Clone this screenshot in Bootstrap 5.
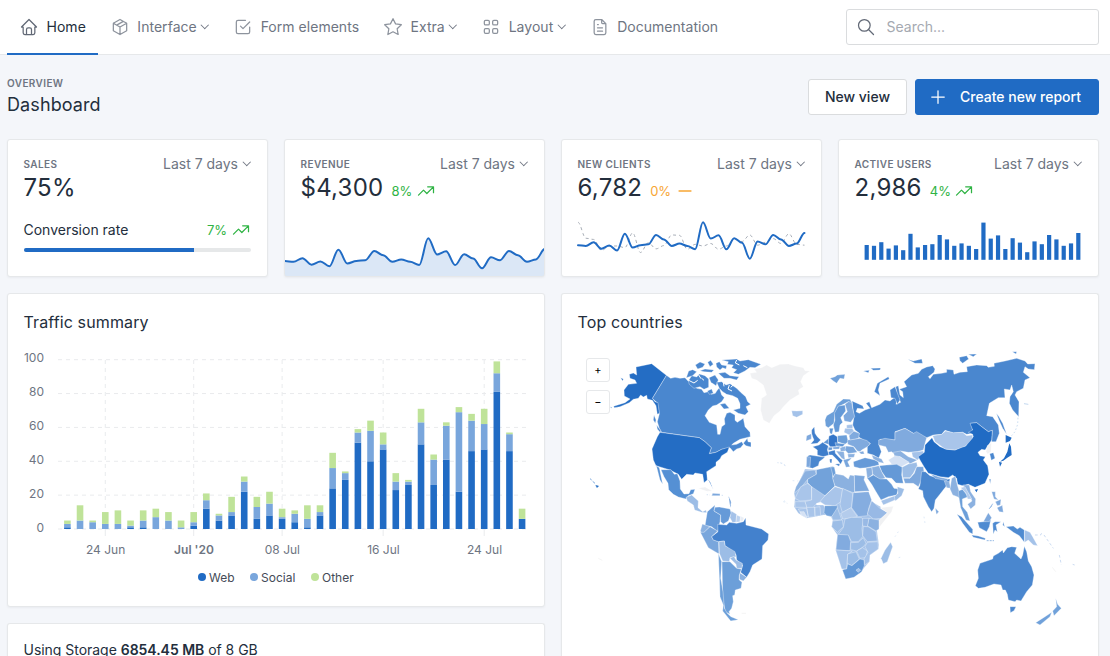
<!DOCTYPE html>
<html lang="en">
<head>
<meta charset="utf-8">
<meta name="viewport" content="width=device-width, initial-scale=1">
<title>Dashboard</title>
<link href="https://cdn.jsdelivr.net/npm/bootstrap@5.3.0/dist/css/bootstrap.min.css" rel="stylesheet">
<style>
:root{--blue:#206bc4;--ink:#232e3c;--muted:#6e7582;--line:#e6e8ea}
body{font-family:Inter,"Liberation Sans",sans-serif;font-size:14px;line-height:20px;color:var(--ink);background:#f4f6fa;height:656px;overflow:hidden}
.wrap{padding:0 11px 0 7px}
.topbar{height:55px;background:#fff;border-bottom:1px solid var(--line)}
.topbar .nav-link{height:55px;padding:0 12px 1px;color:var(--muted);display:flex;align-items:center;gap:7.5px;letter-spacing:.03px;white-space:nowrap}
.topbar .nav-link.active{color:var(--ink);border-bottom:2px solid var(--blue);padding:1px 12px 0}
.topbar .nav-link .ico{color:#8d939d}
.topbar .nav-link.active .ico{color:#626976}
.ico{width:20px;height:20px;flex:none;fill:none;stroke:currentColor;stroke-width:1.5;stroke-linecap:round;stroke-linejoin:round}
.caret{display:inline-block;width:5.5px;height:5.5px;border:solid currentColor;border-width:0 1.2px 1.2px 0;transform:rotate(45deg);margin:0 1.5px 2px 6px;vertical-align:2.5px}
.topbar .caret{margin:0 1.2px 2px 5.7px}
.finder{width:253px;height:36px;border:1px solid #dadcde;border-radius:3px;background:#fff;color:#626976;padding-left:9px;gap:10.5px;margin-top:9px}
.finder input{border:0;outline:0;width:190px;padding:0;background:none;color:var(--ink)}
.finder input::placeholder{color:#a5a9b1}
.pagehead{height:84px;padding-top:24px}
.sub{font-size:10px;font-weight:600;letter-spacing:.4px;color:var(--muted);text-transform:uppercase}
.over{line-height:9px}
.ttl{font-size:18px;line-height:24px;font-weight:400;letter-spacing:.1px;margin-top:4.5px}
.btn-flat{height:36px;border:1px solid #dadcde;border-radius:3px;font-size:14px;line-height:20px;padding:0 16px;font-weight:500;background:#fff;color:var(--ink);display:flex;align-items:center}
.btn-go{background:var(--blue);border-color:var(--blue);color:#fff;width:184px;padding:0 12px;gap:12px}
.tiles{display:grid;grid-template-columns:repeat(4,1fr);gap:16px}
.halves{display:grid;grid-template-columns:repeat(2,1fr);gap:16px;margin-top:16px;height:363px}
.panel{background:#fff;border:1px solid var(--line);border-radius:3px;box-shadow:0 1px 2px rgba(35,46,60,.05);overflow:hidden;position:relative}
.tile{height:138px}
.tile .inner{padding:14px 16px 0 15.5px}
.period{color:var(--muted);white-space:nowrap}
.figure-num{font-size:24px;line-height:28px;letter-spacing:.25px}
.up{color:#2fb344}.flat{color:#f7a634}
.conv{margin-top:18px}
.conv .up,.delta{font-size:13px}
.delta{line-height:20px;height:20px;margin-top:7px}
.delta .ico{margin-left:3.5px}
.bar-track{height:4px;border-radius:2px;background:#e6e8e9;margin-top:8px}
.bar-track .progress-bar{background:var(--blue)}
.spark{display:block}
.ptitle{font-size:16px;line-height:20px;height:46px;padding:18px 16px 0 15.5px;font-weight:400;letter-spacing:.12px}
.tick{font-size:12px;fill:#6e7582}
.legend-t{font-size:12px;fill:#444b57}
.zbtn{position:absolute;left:24px;width:24px;height:24px;border:1px solid var(--line);border-radius:3px;background:#fff;font-size:11px;line-height:23px;text-align:center;padding:0}
.z-in{top:64px}.z-out{top:96px}
.traffic{height:314px;flex:none}
.storage{height:33px;padding:16px 15.5px 0;letter-spacing:-.03px;line-height:20px}
.storage strong{font-weight:600}
.cut{border-bottom:0;border-radius:3px 3px 0 0}
.world path{stroke:#fff;stroke-opacity:.6;stroke-width:1.7;stroke-linejoin:round}
.world .channel{stroke-opacity:1;stroke-width:3;fill:none}
</style>
</head>
<body>
<svg width="0" height="0" class="d-none">
<symbol id="i-home" viewBox="0 0 24 24"><path d="M5 12H3l9-9 9 9h-2M5 12v7a2 2 0 0 0 2 2h10a2 2 0 0 0 2-2v-7M9 21v-6a2 2 0 0 1 2-2h2a2 2 0 0 1 2 2v6"/></symbol>
<symbol id="i-box" viewBox="0 0 24 24"><path d="M12 3l8 4.500v9L12 21l-8-4.500v-9zM12 12l8-4.500M12 12v9M12 12L4 7.500M16 5.250l-8 4.500"/></symbol>
<symbol id="i-check" viewBox="0 0 24 24"><path d="M9 11l3 3 8-8M20 12v6a2 2 0 0 1-2 2H6a2 2 0 0 1-2-2V6a2 2 0 0 1 2-2h9"/></symbol>
<symbol id="i-star" viewBox="0 0 24 24"><path d="M12 17.750l-6.172 3.245 1.179-6.873-4.993-4.867 6.900-1L12 2l3.086 6.253 6.900 1-4.993 4.867 1.179 6.873z"/></symbol>
<symbol id="i-grid" viewBox="0 0 24 24"><rect x="4" y="4" width="6" height="5.500" rx="1.500"/><rect x="4" y="14" width="6" height="5.500" rx="1.500"/><rect x="14" y="4" width="6" height="5.500" rx="1.500"/><rect x="14" y="14" width="6" height="5.500" rx="1.500"/></symbol>
<symbol id="i-doc" viewBox="0 0 24 24"><path d="M14 3v4a1 1 0 0 0 1 1h4M17 21H7a2 2 0 0 1-2-2V5a2 2 0 0 1 2-2h7l5 5v11a2 2 0 0 1-2 2zM9 9h1M9 13h6M9 17h6"/></symbol>
<symbol id="i-find" viewBox="0 0 24 24"><circle cx="10" cy="10" r="7"/><path d="M21 21l-6-6"/></symbol>
<symbol id="i-plus" viewBox="0 0 24 24"><path d="M12 4.500v15M4.500 12h15"/></symbol>
<symbol id="i-up" viewBox="0 0 24 24"><path d="M3 17l6-6 4 4 8-8M14 7h7v7"/></symbol>
<symbol id="i-minus" viewBox="0 0 24 24"><path d="M5 12h14" stroke-width="2"/></symbol>
</svg>

<header class="topbar">
 <div class="wrap d-flex justify-content-between">
  <nav class="nav flex-nowrap">
   <a class="nav-link active" href="#"><svg class="ico"><use href="#i-home"/></svg><span>Home</span></a>
   <a class="nav-link" href="#"><svg class="ico"><use href="#i-box"/></svg><span>Interface<i class="caret"></i></span></a>
   <a class="nav-link" href="#"><svg class="ico"><use href="#i-check"/></svg><span>Form elements</span></a>
   <a class="nav-link" href="#"><svg class="ico"><use href="#i-star"/></svg><span>Extra<i class="caret"></i></span></a>
   <a class="nav-link" href="#"><svg class="ico"><use href="#i-grid"/></svg><span>Layout<i class="caret"></i></span></a>
   <a class="nav-link" href="#"><svg class="ico"><use href="#i-doc"/></svg><span>Documentation</span></a>
  </nav>
  <div class="finder d-flex align-items-center"><svg class="ico"><use href="#i-find"/></svg><input placeholder="Search..."></div>
 </div>
</header>

<main class="wrap">
 <div class="pagehead d-flex justify-content-between">
  <div><div class="sub over">Overview</div><div class="ttl">Dashboard</div></div>
  <div class="d-flex gap-2"><button class="btn btn-flat">New view</button><button class="btn btn-flat btn-go"><svg class="ico"><use href="#i-plus"/></svg>Create new report</button></div>
 </div>

 <section class="tiles">
  <div class="panel tile"><div class="inner">
   <div class="d-flex justify-content-between"><span class="sub">Sales</span><span class="period">Last 7 days<i class="caret"></i></span></div>
   <div class="figure-num">75%</div>
   <div class="conv d-flex justify-content-between"><span>Conversion rate</span><span class="up d-flex">7%<svg class="ico ms-1"><use href="#i-up"/></svg></span></div>
   <div class="bar-track d-flex overflow-hidden"><div class="progress-bar w-75"></div></div>
  </div></div>
  <div class="panel tile"><div class="inner">
   <div class="d-flex justify-content-between"><span class="sub">Revenue</span><span class="period">Last 7 days<i class="caret"></i></span></div>
   <div class="d-flex"><span class="figure-num me-2">$4,300</span><span class="delta up d-flex">8%<svg class="ico"><use href="#i-up"/></svg></span></div>
  </div><svg class="spark" id="rev" width="259" height="75" viewBox="285 202 259 75"></svg></div>
  <div class="panel tile"><div class="inner">
   <div class="d-flex justify-content-between"><span class="sub">New clients</span><span class="period">Last 7 days<i class="caret"></i></span></div>
   <div class="d-flex"><span class="figure-num me-2">6,782</span><span class="delta flat d-flex">0%<svg class="ico"><use href="#i-minus"/></svg></span></div>
  </div><svg class="spark" id="cli" width="259" height="74" viewBox="562 202 259 74"></svg></div>
  <div class="panel tile"><div class="inner">
   <div class="d-flex justify-content-between"><span class="sub">Active users</span><span class="period">Last 7 days<i class="caret"></i></span></div>
   <div class="d-flex"><span class="figure-num me-2">2,986</span><span class="delta up d-flex">4%<svg class="ico"><use href="#i-up"/></svg></span></div>
  </div><svg class="spark" id="act" width="259" height="74" viewBox="839 202 259 74"></svg></div>
 </section>

 <section class="halves">
  <div class="d-flex flex-column gap-3">
   <div class="panel traffic"><div class="ptitle">Traffic summary</div>
    <svg class="spark" id="traffic" width="536" height="266" viewBox="8 340 536 266"></svg></div>
   <div class="panel storage cut">Using Storage <strong>6854.45 MB</strong> of 8 GB</div>
  </div>
  <div class="panel cut"><div class="ptitle">Top countries</div>
   <button class="zbtn z-in">+</button><button class="zbtn z-out">−</button>
   <svg class="spark world" width="536" height="316" viewBox="562 340 536 316">
<g transform="translate(570 345) scale(.33333)">
<g fill="#4a87cf">
<path d="M289,91L302,100 315,97 330,100 345,98 352,106 368,118 380,130 395,133 402,143 415,140 425,148 436,145 440,138 448,128 455,150 463,158 455,170 440,180 428,183 415,195 405,212 418,232 440,240 443,268 450,268 455,245 465,238 463,222 470,205 480,202 495,210 495,226 502,232 520,220 525,245 540,262 541,275 510,283 490,295 485,300 500,298 515,290 520,298 512,308 500,312 490,320 480,308 455,313 438,322 418,326 424,308 405,290 388,278 275,262 268,250 262,230 268,207 262,174 247,160Z"/>
<path d="M355,108L365,92 380,96 388,87 405,92 416,102 416,127 402,133 390,125 372,130 358,118Z"/><path d="M349,98L356,78 368,74 380,80 368,92Z"/>
<path d="M376,60L390,51 405,57 398,67 383,72Z"/><path d="M390,77L405,72 432,75 425,82 402,80Z"/><path d="M413,52L422,46 430,58 420,65Z"/>
<path d="M438,55L448,50 455,60 470,62 468,72 458,68 450,75 440,66Z"/><path d="M455,45L500,42 510,48 535,44 573,58 555,68 540,67 525,78 505,88 490,83 500,74 485,68 490,60 472,58 475,50Z"/>
<path d="M445,85L465,82 480,92 507,95 500,105 480,100 462,100Z"/><path d="M417,98L435,90 445,105 438,122 423,112Z"/>
<path d="M440,112L455,110 468,120 480,116 500,130 512,142 527,155 533,170 542,178 528,185 535,200 525,210 505,205 490,195 510,190 510,176 503,160 488,152 470,148 458,140 448,130Z"/>
<path d="M450,178L465,175 478,190 462,192Z"/><path d="M520,295L532,280 534,290 543,292 543,306 528,302Z"/><path d="M412,138L425,132 430,145 418,148Z"/><path d="M252,210L258,225 256,235 250,225Z"/><path d="M260,240L273,258 270,262 262,252Z"/>
</g>
<path class="channel" d="M352,104L372,114 383,106M386,90L393,101M478,120L474,132 486,138M500,45L496,54 508,60M520,62L532,68M490,120L482,127M460,112L462,124M395,100L402,106"/>
<g fill="#246dc4"><path d="M198,66L245,56 289,91 247,160 255,170 264,173 268,205 262,208 258,182 247,166 232,162 230,151 220,156 212,150 205,160 190,163 178,173 150,185 133,188 131,184 165,173 180,162 163,153 162,135 175,118 200,115 195,105 180,100 178,88 190,84 200,90Z"/>
<path d="M270,262L388,278 405,290 424,308 418,326 438,322 455,313 478,306 472,322 455,332 450,342 438,352 438,362 410,380 412,405 402,413 398,388 375,384 370,390 350,388 335,403 325,388 300,375 258,362 250,345 246,312 262,275Z"/><path d="M152,98L160,102 158,108Z"/><path style="stroke:#246dc4" d="M77,421L86,423 81,428Z"/><path d="M60,401L65,405M68,409L75,415M122,187L125,188" style="stroke:#246dc4;stroke-width:3"/></g>
<path fill="#5590d4" d="M273,374L303,374 313,388 322,386 330,408 331,432 342,447 357,446 362,434 375,433 370,446 355,452 348,462 325,456 310,448 296,434 294,415 282,395Z"/><path fill="#5590d4" d="M259,362L268,368 278,418 270,405Z"/>
<path fill="#9cbde6" d="M348,457L365,450 385,468 384,488 398,500 408,495 410,503 395,502 374,495 370,480 352,468Z"/>
<path fill="#f0f1f3" d="M385,430L405,426 427,438 410,439Z"/><path fill="#7da8dd" d="M428,445L450,446 450,452 425,452Z"/><path fill="#7da8dd" d="M410,449L420,450M455,451L464,451M476,455L483,470 481,488M415,405L420,410 428,430" style="stroke:#7da8dd;stroke-dasharray:4 5"/>
<path fill="#669ad8" d="M412,500L435,480 432,498 452,510 450,530 443,560 425,545 405,542Z"/>
<path fill="#669ad8" d="M435,487L448,486 480,492 484,505 475,528 460,537 452,530 452,510 432,498Z"/>
<path fill="#a4c2e9" d="M484,498L500,508 498,532 487,532 480,518Z"/><path fill="#bcd2ef" d="M500,510L512,515 510,530 498,532Z"/><path fill="#e8edf5" d="M512,514L522,518 518,530 510,530Z"/>
<path fill="#8bb1e0" d="M397,537L420,545 398,567 391,558Z"/>
<path fill="#79a6dc" d="M391,562L402,562 420,545 443,558 425,575 430,585 446,590 447,627 415,608Z"/>
<path fill="#4381cd" d="M443,538L470,540 478,532 500,535 520,530 527,518 528,540 575,552 596,567 594,585 578,602 576,642 548,660 540,680 530,697 512,682 518,660 500,645 498,628 465,602 463,588 446,590 430,585 425,575 444,560Z"/>
<path fill="#9cbde6" d="M447,590L463,588 465,602 495,620 498,635 480,638 478,650 458,648 448,625Z"/>
<path fill="#9cbde6" d="M480,640L492,634 498,645 517,655 516,670 500,670 498,658Z"/>
<path fill="#8bb1e0" d="M509,683L530,697 520,708 508,703Z"/>
<path fill="#6c9fd9" d="M456,650L480,650 500,670 514,672 508,690 507,704 516,712 513,730 496,735 494,750 488,752 490,770 485,790 477,800 480,808 466,800 458,760Z"/>
<path fill="#6c9fd9" d="M445,625L455,650 452,700 459,740 463,790 472,805 483,815 505,824 482,828 458,798 460,780 450,755 449,720Z"/>
<path fill="#f0f1f3" stroke="none" d="M540,85L560,82 552,72 575,68 590,60 605,68 630,58 655,57 675,63 700,68 705,77 720,78 700,92 692,110 700,125 685,135 688,148 660,165 640,185 630,198 612,212 598,235 580,225 572,195 575,160 590,150 580,120 560,105 545,100Z"/>
<path fill="none" style="stroke:#8bb1e0;stroke-dasharray:4 7" d="M622,353L640,355 648,365M640,470L652,475"/>
<path fill="#eee" d="M515,805L528,805M85,640L97,646" style="stroke:#ddd"/>
</g>
<g transform="translate(780 345) scale(.33333)">
<path fill="#4a87cf" d="M216,168L248,182 252,192 232,190 228,200 238,205 255,195 270,190 258,175 268,170 275,188 300,178 315,165 330,168 345,156 352,162 348,178 362,172 352,150 347,125 355,122 360,150 370,158 368,140 358,133 380,125 372,110 395,90 415,85 425,73 440,66 458,62 465,72 462,82 445,95 450,101 460,88 485,85 500,82 500,73 520,75 522,88 540,82 562,80 560,65 590,60 620,62 625,67 643,64 642,55 675,48 710,40 735,48 743,57 765,56 763,74 745,72 735,65 730,82 750,98 735,105 730,130 710,140 705,150 717,170 716,215 698,195 688,175 690,155 700,140 695,120 690,135 673,132 675,158 655,158 628,175 620,212 638,215 655,240 658,265 648,290 635,290 637,256 625,260 605,245 590,233 572,235 577,250 578,265 560,268 548,262 520,264 495,256 485,268 460,270 440,278 420,272 400,265 375,250 345,260 345,285 300,283 297,300 304,320 296,340 280,330 262,325 262,305 271,295 250,285 235,275 238,265 225,255 218,240 222,215 220,200Z"/>
<g fill="#4a87cf"><path d="M283,140L292,115 325,95 328,102 300,115 295,135 300,152Z"/><path d="M330,135L345,125 360,165 352,178 345,160 333,158Z"/><path d="M383,43L400,48 425,42 428,55 405,55Z"/><path d="M250,78L268,76 265,83Z"/><path d="M272,70L302,69 300,75 280,76Z"/><path d="M538,37L560,32 566,42 548,55 540,47Z"/><path d="M565,28L590,27 580,35Z"/><path d="M697,20L710,20 708,27Z"/><path d="M649,205L657,215 668,235 680,268 668,250 658,228Z"/><path d="M732,176L745,178" style="stroke:#4a87cf"/><path fill="#70a1da" d="M150,100L165,95 172,90 195,88 192,102 180,100 170,115 160,108Z"/></g>
<path fill="#a4c2e9" d="M35,197L50,198 68,197 68,208 50,217 38,212Z"/>
<path fill="#6c9fd9" d="M135,225L140,212 160,200 170,178 190,162 210,163 217,175 205,170 190,178 175,185 165,205 162,235 145,248 137,243Z"/>
<path fill="#6499d7" d="M165,225L163,205 175,183 195,180 197,198 182,218 188,232 180,240 177,260 165,262 160,240Z"/>
<path fill="#7da8dd" d="M195,178L205,170 215,172 218,190 224,215 212,232 193,228 190,212 202,200Z"/>
<path fill="#5f96d6" d="M148,250L160,250 156,268 150,265Z"/>
<path fill="#3f7ecb" d="M95,255L103,245 105,265 112,275 122,285 112,295 92,297 102,285 98,275 95,265Z"/><path fill="#7da8dd" d="M80,272L94,266 94,282 78,288Z"/>
<path fill="#3d7dcb" d="M98,305L117,300 128,292 145,303 142,315 147,330 130,335 112,330 112,315Z"/>
<path fill="#4a87cf" d="M83,333L90,330 135,337 118,350 115,362 98,370 80,366Z"/><path fill="#7da8dd" d="M80,335L92,336 90,366 79,366Z"/>
<path fill="#3375c8" d="M147,273L160,268 172,275 173,292 168,305 150,305 144,295Z"/>
<path fill="#5f96d6" d="M130,293L146,280 145,298Z"/><path fill="#6499d7" d="M145,307L158,307 156,315 145,316Z"/>
<path fill="#6c9fd9" d="M173,272L200,270 205,290 195,298 173,290Z"/>
<path fill="#5f96d6" d="M165,293L195,297 188,305 168,303Z"/><path fill="#7da8dd" d="M158,307L180,303 178,312 160,313Z"/>
<path fill="#4280cc" d="M145,320L165,315 166,325 180,340 188,346 182,358 172,345 157,330 147,330Z"/><path fill="#4280cc" d="M165,357L180,356 177,364Z"/><path fill="#4280cc" d="M149,342L156,342 155,354 150,353Z"/>
<path fill="#8bb1e0" d="M180,308L197,303 198,317 182,320Z"/><path fill="#8bb1e0" d="M168,318L192,320 195,345 185,340Z"/><path fill="#79a6dc" d="M198,303L220,305 232,322 205,326 195,315Z"/>
<path fill="#8bb1e0" d="M203,327L225,326 222,337 205,338Z"/><path fill="#79a6dc" d="M190,345L215,338 210,345 203,350 210,365 198,367Z"/>
<path fill="#80aade" d="M203,285L240,280 262,287 271,297 262,305 245,315 240,320 232,318 222,305 203,298Z"/><path fill="#80aade" d="M237,322L250,318 253,327 243,327Z"/>
<path fill="#80aade" d="M207,272L220,258 238,265 236,280 210,285Z"/><path fill="#a4c2e9" d="M195,250L216,250 222,258 208,270 192,262Z"/><path fill="#a4c2e9" d="M200,240L218,238 218,250 200,250Z"/>
<path fill="#669ad8" d="M220,350L235,345 255,338 285,345 295,350 297,360 260,368 240,370 222,365Z"/>
<path fill="#8bb1e0" d="M275,330L305,342 312,355 298,352 280,342Z"/>
<path fill="#80aade" d="M296,300L296,285 315,280 345,285 345,262 375,250 400,265 410,260 440,278 436,292 430,315 412,320 385,322 362,318 352,330 340,325 335,320 325,322 317,305Z"/>
<path fill="#8bb1e0" d="M340,322L362,318 385,335 412,345 390,357 360,335 345,338Z"/><path fill="#a4c2e9" d="M395,322L430,318 430,330 412,345 398,335Z"/>
<path fill="#d4e1f4" d="M325,345L345,332 360,335 388,352 365,365 335,358Z"/>
<path fill="#6499d7" d="M298,362L320,360 350,358 367,367 365,390 370,415 348,414 335,400 318,398 305,380Z"/>
<path fill="#9cbde6" d="M366,367L385,357 410,352 412,362 400,385 390,398 368,398Z"/>
<path fill="#7da8dd" d="M370,400L390,400 403,385 410,365 430,365 432,380 425,405 415,425 400,415 375,415Z"/>
<path fill="#8bb1e0" d="M275,367L297,362 305,380 316,400 300,404 278,388Z"/><path fill="#8bb1e0" d="M258,370L275,367 278,388 262,402Z"/>
<path fill="#6499d7" d="M262,400L280,390 300,402 320,402 335,418 342,430 355,432 350,450 325,455 303,465 288,440 275,418Z"/>
<path fill="#a4c2e9" d="M303,467L345,452 347,464 310,480Z"/><path fill="#9cbde6" d="M352,425L373,432 365,452 346,468 343,455 354,445Z"/>
<path fill="#4a87cf" d="M425,380L436,380 450,392 485,402 510,402 508,412 492,432 478,450 466,465 462,490 455,500 445,485 430,455 428,437 415,432 420,420Z"/><path fill="#6c9fd9" d="M467,490L476,500 470,508Z"/>
<path fill="#a4c2e9" d="M75,372L110,374 108,390 83,402 83,420 95,460 110,480 130,480 150,510 130,510 105,515 80,520 55,505 42,485 45,460 42,445 60,405ZM160,440L190,430 240,450 302,485 305,530 290,552 297,600 295,612 270,630 268,650 255,665 240,685 200,690 180,650 167,615 172,570 155,545 158,525 150,510Z"/>
<path fill="#8bb1e0" d="M75,378L105,375 109,388 83,403 65,425 42,445 48,425 60,405Z"/><path fill="#72a2da" d="M109,374L160,364 158,395 165,423 135,452 120,452 83,413 83,403 109,388Z"/><path fill="#6c9fd9" d="M152,366L163,366 167,385 160,395Z"/>
<path fill="#8bb1e0" d="M165,386L190,391 205,402 210,390 223,392 224,444 214,441 165,423 158,400Z"/><path fill="#7da8dd" d="M223,390L255,393 252,404 268,438 224,440Z"/>
<path fill="#a9c5ea" d="M62,425L83,415 95,425 95,465 60,468 45,460Z"/><path fill="#a9c5ea" d="M95,425L135,452 135,467 110,475 97,490 80,487 75,470 95,465Z"/><path fill="#a9c5ea" d="M135,452L165,425 188,432 183,470 165,482 135,480 120,470Z"/>
<path fill="#a4c2e9" d="M188,430L218,445 215,488 187,502 180,478Z"/><path fill="#85ade0" d="M220,443L266,440 275,465 266,490 262,512 235,515 215,488Z"/>
<path fill="#98b9e5" d="M275,467L300,490 323,503 305,520 280,522 262,507Z"/><path fill="#f0f1f3" d="M302,488L340,484 335,500 310,532 297,548 297,525 322,503Z"/>
<path fill="#a9c5ea" d="M45,470L75,470 80,487 45,487ZM55,492L80,490 85,515 65,510ZM80,487L105,487 105,515 85,517ZM103,487L120,485 122,512 105,514Z"/><path fill="#d4e1f4" d="M60,500L72,500 82,520 65,512Z"/>
<path fill="#72a2da" d="M134,482L172,482 172,495 155,515 140,512 132,503Z"/><path fill="#9cbde6" d="M172,488L180,510 185,525 158,525 155,515Z"/><path fill="#b4ccec" d="M182,505L213,488 232,515 210,520 188,522Z"/>
<path fill="#9cbde6" d="M158,528L187,525 190,545 172,562 155,545Z"/><path fill="#9cbde6" d="M195,522L215,517 245,518 250,525 246,550 248,575 235,590 215,590 205,572 175,568 190,548Z"/>
<path fill="#8bb1e0" d="M267,520L297,525 297,552 288,558 262,542Z"/><path fill="#98b9e5" d="M250,545L264,545 288,560 292,588 262,590 248,572Z"/><path fill="#98b9e5" d="M248,520L267,520 262,545 248,543Z"/>
<path fill="#82abdf" d="M173,568L205,570 212,590 210,617 168,615Z"/><path fill="#9cbde6" d="M212,593L235,592 250,578 258,595 250,605 230,618 212,614Z"/>
<path fill="#a4c2e9" d="M167,615L217,618 203,628 200,672 185,672Z"/><path fill="#9cbde6" d="M203,627L228,620 238,642 215,662 202,655Z"/><path fill="#a4c2e9" d="M230,618L248,608 262,618 258,638 240,640Z"/>
<path fill="#a4c2e9" d="M262,592L294,590 295,612 270,630 268,650 254,660 252,642 264,622 255,605Z"/>
<path fill="#6499d7" d="M187,674L200,672 203,657 216,662 240,642 252,645 253,662 245,680 222,697 197,702Z"/><path fill="#a4c2e9" d="M228,675L236,670 242,676 234,682Z"/>
<path fill="#9cbde6" d="M332,592L338,605 322,650 310,656 303,640 315,615Z"/>
<path fill="none" style="stroke:#9cbde6;stroke-dasharray:5 9" d="M432,515L435,535M355,560L345,575M356,638L366,635M12,467L22,474M38,407L55,408M0,353L16,362"/>
</g>
<g transform="translate(920 345) scale(.33333)">
<path fill="#206bc4" d="M36,278L42,290 60,305 80,313 105,315 125,305 137,303 145,285 160,276 158,268 145,262 158,255 150,235 170,233 185,245 205,260 217,256 215,285 207,298 195,315 185,313 174,322 180,332 196,335 190,345 203,362 207,388 195,415 165,427 145,418 128,422 113,418 110,400 98,390 85,398 60,395 25,385 12,365 0,345 -5,335 13,322 15,300Z"/>
<path fill="#a9c5ea" d="M38,272L65,268 77,258 100,263 128,262 140,272 158,270 157,280 137,303 105,315 75,312 45,290Z"/>
<path fill="#7da8dd" d="M32,387L60,397 85,402 80,407 45,400Z"/><path fill="#8bb1e0" d="M73,408L88,410 92,430 80,428Z"/>
<path fill="#8bb1e0" d="M95,400L106,394 112,420 118,440 122,462 112,455 98,450 90,432Z"/>
<path fill="#6c9fd9" d="M115,438L128,433 145,455 127,462 128,485 142,502 150,528 138,525 122,488 118,465Z"/>
<path fill="#8bb1e0" d="M128,420L148,420 152,440 167,462 166,480 152,492 143,478 156,468 148,450Z"/><path fill="#b4ccec" d="M122,428L135,425 155,462 143,462 138,445Z"/>
<g fill="#4f8bd1"><path d="M111,508L125,515 158,553 158,567 148,562 128,535Z"/><path d="M155,570L175,573 196,580 195,585 160,577Z"/><path d="M173,532L190,530 212,525 208,545 200,560 178,548Z"/><path d="M218,535L225,530 243,530 228,540 232,560 225,555 220,568Z"/><path d="M258,545L280,543 292,552 300,547 313,555 313,592 298,572 280,562Z"/><path d="M250,530L254,545 248,540Z"/><path d="M200,587L222,587" style="stroke:#4f8bd1;stroke-dasharray:6 3;stroke-width:3"/></g>
<path fill="#7da8dd" d="M190,530L205,503 215,518 208,530Z"/><path fill="#a4c2e9" d="M314,555L330,562 338,575 353,602 340,600 325,585 314,592Z"/>
<g fill="#7da8dd"><path d="M215,440L226,440 226,455 235,465 222,462Z"/><path d="M231,488L247,481 250,502 238,500Z"/><path d="M226,470L243,463 241,480 232,482Z"/><path d="M207,402L213,402 211,417Z"/><path d="M207,492L218,476 214,485Z" style="stroke:#7da8dd"/><path d="M46,490L56,500 49,508Z"/></g>
<path fill="#206bc4" style="stroke:none" d="M257,270L275,278 270,288 257,293ZM268,295L273,305 275,330 262,338 250,347 240,350 252,340 262,320ZM237,350L246,353 240,365ZM164,434L174,432 170,442Z"/>
<path fill="#4a87cf" d="M209,326L220,323 225,340 214,346Z"/><path fill="#f0f1f3" d="M202,302L214,293 213,320 203,327 198,320Z"/>
<path fill="none" style="stroke:#6c9fd9;stroke-dasharray:5 6" d="M294,218L293,238 285,260 275,272"/>
<path fill="#4a87cf" d="M180,655L218,642 220,633 235,625 248,615 250,624 262,608 275,605 290,607 284,625 303,642 308,630 313,604 320,620 325,648 335,665 342,690 337,720 320,740 303,768 290,765 285,770 265,765 262,748 256,735 248,735 243,720 222,717 195,727 175,730 166,722 175,700 173,675Z"/><path fill="#4a87cf" d="M270,785L288,785 282,797 271,803Z"/>
<path fill="#70a1da" d="M407,760L413,778 424,790 402,812 398,798 410,785ZM395,802L390,815 360,840 347,833 375,815Z"/>
<path fill="none" style="stroke:#a9c5ea;stroke-dasharray:8 7;stroke-width:3" d="M345,570L362,570 366,562M372,570L400,610M418,630L424,660M458,658L464,660"/><path fill="none" style="stroke:#ddd" d="M397,667L407,680"/>
</g>
   </svg>
  </div>
 </section>
</main>
<script src="https://cdn.jsdelivr.net/npm/bootstrap@5.3.0/dist/js/bootstrap.bundle.min.js"></script>
<script>
const base=[37,35,44,28,36,24,65,31,37,39,62,51,35,41,35,27,93,53,61,27,54,43,19,46,39,62,51,35,41,67];
const prev=[93,54,51,24,35,35,31,67,19,43,28,36,62,61,27,39,35,41,27,35,51,46,62,37,44,53,41,65,39,37];
const clients=base.slice(); clients[22]=4;
function curve(data,x0,step,y0,k){
  let d='';
  data.forEach((v,i)=>{const x=x0+i*step,y=y0-v*k;
    if(!i){d=`M${x},${y}`;return}
    const px=x-step,py=y0-data[i-1]*k,l=step*.35;
    d+=`C${px+l},${py} ${x-l},${y} ${x},${y}`});
  return d;
}
const r=curve(base,284.5,8.98,276,.405);
rev.innerHTML=`<path d="${r}V277H284Z" fill="#206bc4" fill-opacity=".16"/><path d="${r}" fill="none" stroke="#206bc4" stroke-width="2"/>`;
cli.innerHTML=`<path d="${curve(prev,578,7.81,260.3,.409)}" fill="none" stroke="#a8aeb7" stroke-dasharray="3"/><path d="${curve(clients,578,7.81,260.3,.409)}" fill="none" stroke="#206bc4" stroke-width="2" stroke-linecap="round"/>`;
act.innerHTML=base.map((v,i)=>`<rect x="${864.6+i*7.297}" y="${259.8-v*.4}" width="4.2" height="${v*.4}" fill="#206bc4"/>`).join('');
const rows=[[1,2,2],[0,5,9],[0,4,1],[0,3,7],[0,3,8],[1,1,3],[1,4,6],[0,7,5],[0,5,5],[0,1,4],[2,2,6],[12,5,4],[5,3,1],[8,2,9],[22,6,3],[6,7,6],[8,7,7],[6,1,5],[4,5,2],[1,5,8],[8,2,4],[24,12,9],[29,4,1],[51,6,2],[40,18,6],[47,3,7],[23,5,5],[26,2,1],[50,13,8],[26,15,3],[41,20,2],[22,47,3],[46,18,4],[47,15,9],[81,11,7],[46,10,1],[6,0,6]];
const tint=['#206bc4','#79a6dc','#bfe399'];
let t='';
for(let v=0;v<=100;v+=20){const y=529-v*1.693;
  t+=`<path d="M58,${y}H526" stroke="#e9ebed" stroke-dasharray="4"/><text class="tick" x="44" y="${y+2.6}" text-anchor="end">${v}</text>`}
[[3,'24 Jun'],[10,"Jul '20"],[17,'08 Jul'],[25,'16 Jul'],[33,'24 Jul']].forEach(([i,s])=>{const x=67.4+i*12.63;
  t+=`<path d="M${x},360V529" stroke="#e9ebed" stroke-dasharray="4"/><path d="M${x},529V536" stroke="#e9ebed"/><text class="tick" x="${x+.3}" y="554" text-anchor="middle"${i==10?' font-weight="600"':''}>${s}</text>`});
rows.forEach((row,i)=>{let y=529;row.forEach((v,k)=>{const h=v*1.693;y-=h;if(v)t+=`<rect x="${64.1+i*12.63}" y="${y}" width="6.6" height="${h}" fill="${tint[k]}"/>`})});
[['Web',202,209],['Social',254,261],['Other',315,322]].forEach(([s,c,x],k)=>{t+=`<circle cx="${c}" cy="577" r="4" fill="${tint[k]}"/><text class="legend-t" x="${x}" y="582">${s}</text>`});
traffic.innerHTML=t;
</script>
</body>
</html>
